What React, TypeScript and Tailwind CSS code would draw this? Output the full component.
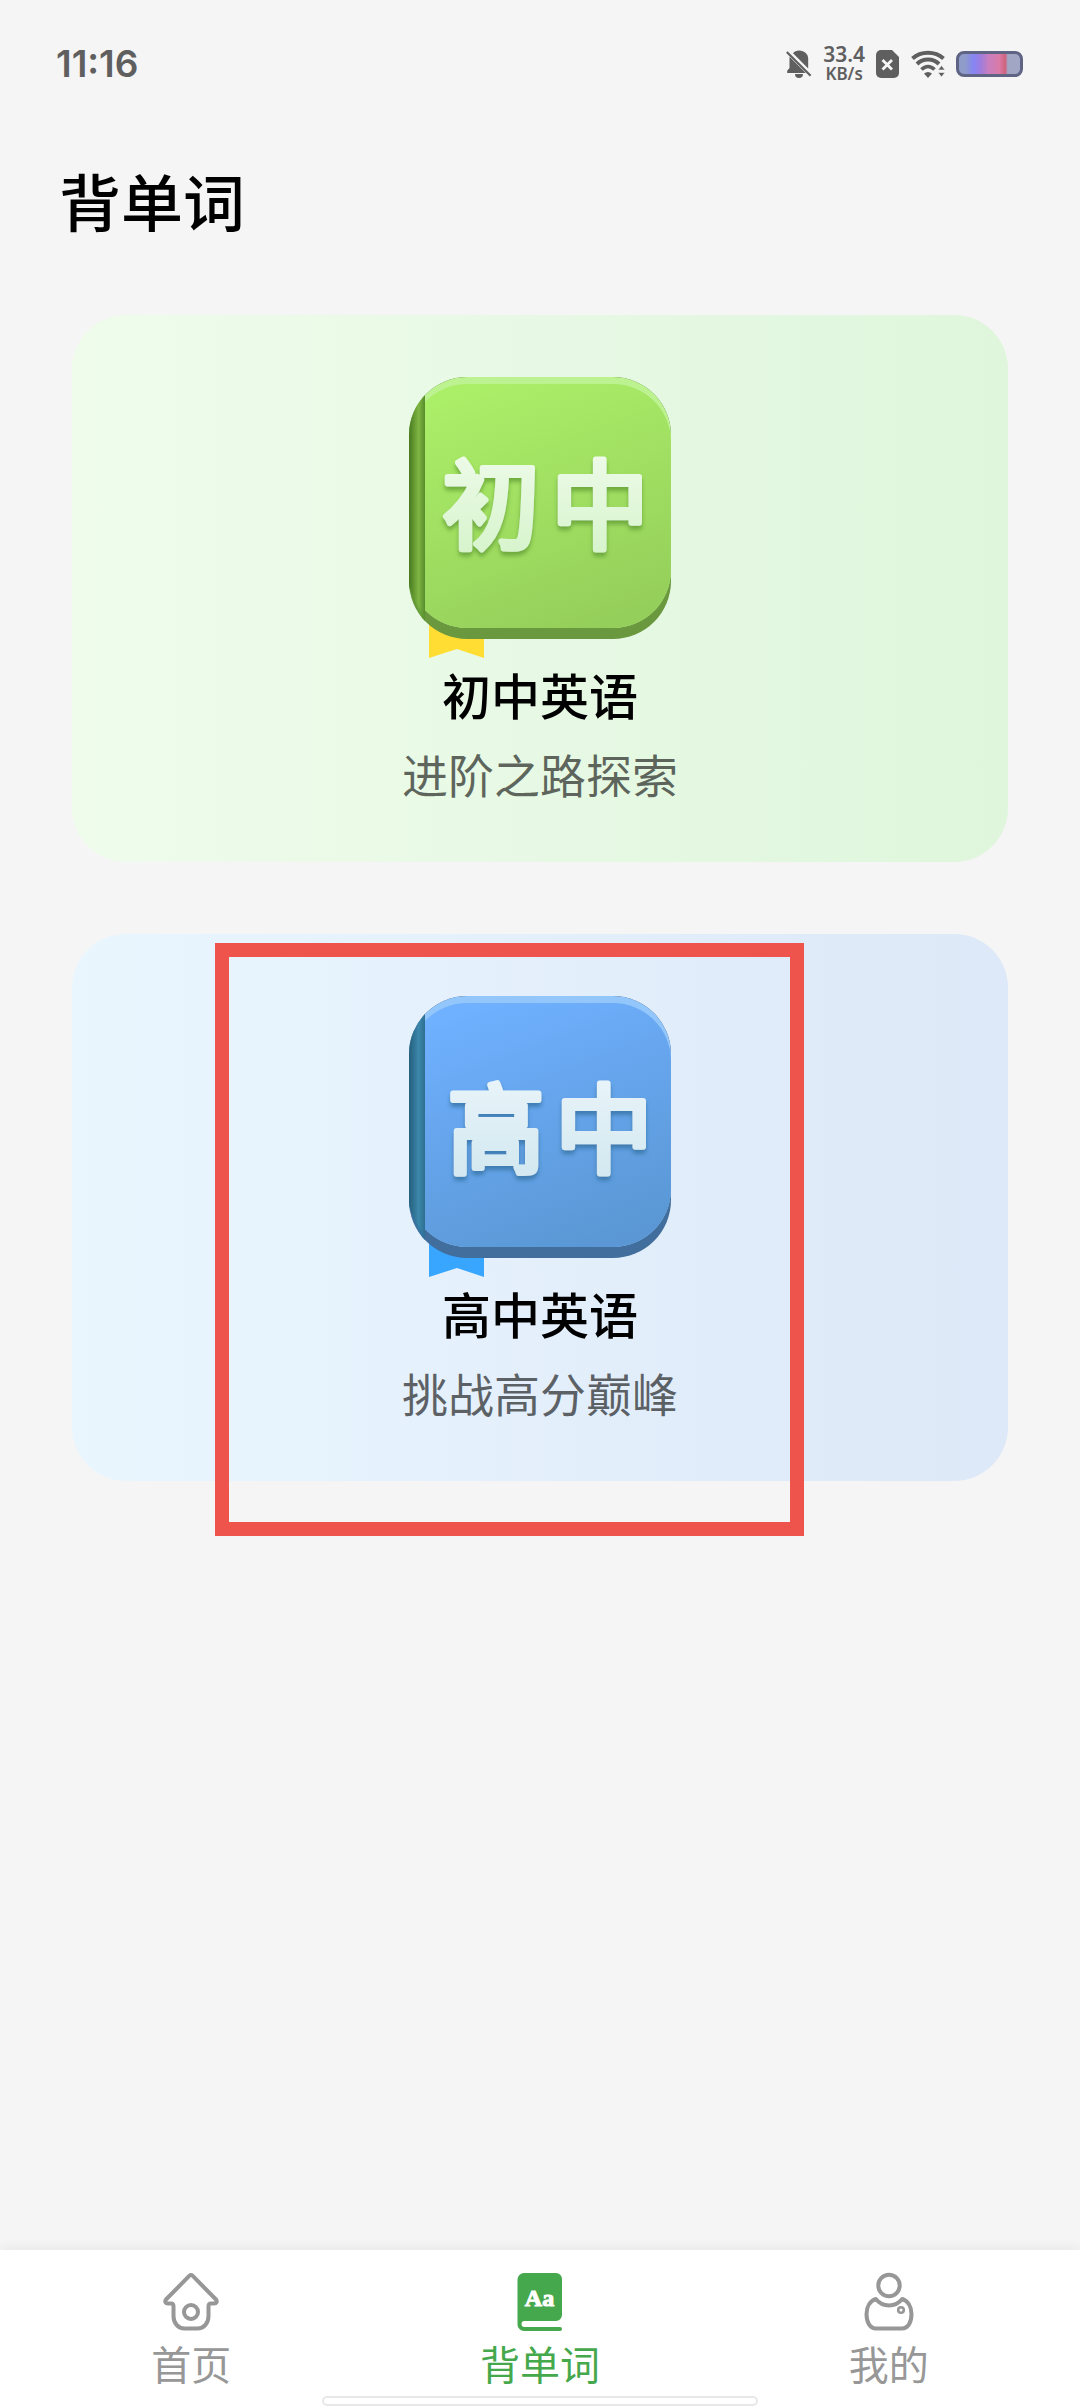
import type { ReactNode } from "react";

type Course = {
  id: string;
  badge: { char: string; x: number }[];
  badgeY: number;
  title: string;
  subtitle: string;
  card: string;
  cover: [string, string];
  spine: [string, string, string];
  highlight: string;
  base: string;
  ribbon: string;
  glyph: [string, string];
  shade: string;
  marked: boolean;
};

const courses: Course[] = [
  {
    id: "junior",
    badge: [
      { char: "初", x: 82 },
      { char: "中", x: 191 },
    ],
    badgeY: 164,
    title: "初中英语",
    subtitle: "进阶之路探索",
    card: "from-[#effcec] to-[#dff6dc]",
    cover: ["#abee68", "#95cf5b"],
    spine: ["#47791f", "#7fb643", "#578c2c"],
    highlight: "#bdf291",
    base: "#6a983f",
    ribbon: "#ffdd33",
    glyph: ["#f3fcef", "#d3f3c8"],
    shade: "#5d9a32",
    marked: false,
  },
  {
    id: "senior",
    badge: [
      { char: "高", x: 87 },
      { char: "中", x: 195 },
    ],
    badgeY: 169,
    title: "高中英语",
    subtitle: "挑战高分巅峰",
    card: "from-[#eaf6fe] to-[#dde8f8]",
    cover: ["#6fb0ff", "#5a97d4"],
    spine: ["#245f7c", "#3c87ab", "#2d6f91"],
    highlight: "#93c7fb",
    base: "#426e9d",
    ribbon: "#38a6ff",
    glyph: ["#eef7fb", "#cfe6ef"],
    shade: "#33719f",
    marked: true,
  },
];

function BookCover({ course }: { course: Course }) {
  const { id } = course;
  return (
    <svg viewBox="0 0 262 282" className="h-[282px] w-[262px]" aria-hidden="true">
      <defs>
        <linearGradient id={`${id}-cover`} x1="0.3" y1="0" x2="0.7" y2="1">
          <stop offset="0" stopColor={course.cover[0]} />
          <stop offset="1" stopColor={course.cover[1]} />
        </linearGradient>
        <linearGradient id={`${id}-spine`} x1="0" y1="0" x2="1" y2="0">
          <stop offset="0" stopColor={course.spine[0]} />
          <stop offset="0.6" stopColor={course.spine[1]} />
          <stop offset="1" stopColor={course.spine[2]} />
        </linearGradient>
        <linearGradient id={`${id}-glyph`} x1="0" y1="0" x2="0" y2="1">
          <stop offset="0" stopColor={course.glyph[0]} />
          <stop offset="1" stopColor={course.glyph[1]} />
        </linearGradient>
        <clipPath id={`${id}-outline`}>
          <rect width="262" height="262" rx="58" />
        </clipPath>
        <filter id={`${id}-shadow`} x="-10%" y="-10%" width="120%" height="130%">
          <feDropShadow dx="0" dy="4" stdDeviation="2" floodColor={course.shade} floodOpacity="0.75" />
        </filter>
      </defs>
      <path d="M20 230h55v51l-27-9-28 9z" fill={course.ribbon} />
      <g clipPath={`url(#${id}-outline)`}>
        <rect width="262" height="262" fill={course.base} />
        <rect width="262" height="251" rx="58" fill={course.highlight} />
        <rect y="7" width="262" height="244" rx="58" fill={`url(#${id}-cover)`} />
        <path d="M0 0h16v250L0 210z" fill={`url(#${id}-spine)`} />
        <path d="M0 204c2 14 8 26 16 33v25H0z" fill={course.shade} fillOpacity="0.45" />
      </g>
      <text
        y={course.badgeY}
        textAnchor="middle"
        fontSize="97"
        fontWeight="400"
        fill={`url(#${id}-glyph)`}
        stroke={`url(#${id}-glyph)`}
        strokeWidth="6"
        strokeLinejoin="round"
        filter={`url(#${id}-shadow)`}
      >
        {course.badge.map(({ char, x }) => (
          <tspan key={char} x={x}>
            {char}
          </tspan>
        ))}
      </text>
    </svg>
  );
}

function CourseCard({ course }: { course: Course }) {
  return (
    <div className="relative">
      <a
        href={`#${course.id}`}
        className={`flex flex-col items-center rounded-[54px] bg-linear-to-r pt-[62px] pb-[57px] ${course.card}`}
      >
        <BookCover course={course} />
        <h2 className="text-[49px] leading-[70px] font-medium text-black">{course.title}</h2>
        <p className="mt-3 text-[46px] leading-[64px] text-black/60">{course.subtitle}</p>
      </a>
      {course.marked && (
        <div className="pointer-events-none absolute top-[9px] right-[204px] left-[143px] h-[593px] border-14 border-[#ef544c]" />
      )}
    </div>
  );
}

function StatusBar() {
  return (
    <div className="flex h-32 items-center justify-between pr-[57px] pl-14 text-[#5f5f5f]">
      <time className="font-['Inter'] text-[37px] leading-10 font-semibold">11:16</time>
      <div className="flex items-center gap-[11px]">
        <svg viewBox="0 0 26 28" className="h-7 w-[26px]" fill="currentColor" aria-label="静音">
          <path d="M7 3.2C8.300 1.300 10.500.4 13.200.4c5.300 0 9 3.500 9 8.600v9.600z" />
          <path d="M3.500 6.800 19.800 23H1.200v-2.300l2.300-2.600zM9 24h8a4 4 0 0 1-8 0z" />
          <path d="M.8 2 24.600 25.800" stroke="currentColor" strokeWidth="2.200" />
        </svg>
        <div className="flex flex-col items-center font-['Noto_Sans'] font-semibold">
          <span className="text-[21px] leading-5">33.4</span>
          <span className="text-[17px] leading-5">KB/s</span>
        </div>
        <svg viewBox="0 0 24 28" className="h-7 w-6" aria-label="无SIM卡">
          <path d="M5 0h11l7 7v16a5 5 0 0 1-5 5H5a5 5 0 0 1-5-5V5a5 5 0 0 1 5-5z" fill="currentColor" />
          <path d="m6.500 10 9.500 9.500m0-9.500-9.500 9.500" stroke="#f5f5f5" strokeWidth="2.800" />
        </svg>
        <svg viewBox="0 0 34 28" className="h-7 w-[34px]" fill="none" aria-label="无线网络">
          <path d="M1.500 8.500C10 .8 24 .8 32.500 8.500" stroke="currentColor" strokeWidth="4" />
          <path d="M6 14c6-6 16-6 22 0" stroke="currentColor" strokeWidth="4" />
          <path d="M10.500 19.500c4-4 9-4 13 0" stroke="currentColor" strokeWidth="3.600" />
          <path d="M13 23.500c2.500-2 5.500-2 8 0l-4 4.500z" fill="currentColor" />
          <path d="m27 20 3.500-4.500L34 20zM27 22.500h7L30.500 27z" fill="currentColor" stroke="#f5f5f5" strokeWidth=".6" />
        </svg>
        <div className="h-[26px] w-[67px] rounded-[8px] border-[3px] border-[#5f6485] bg-[linear-gradient(to_right,#8f9bc8_10%,#8585f5_24%,#a07cdc_36%,#c87fc0_48%,#d97aa8_66%,#d0627c_76%,#a0a6c4_80%)]" />
      </div>
    </div>
  );
}

function HomeIcon() {
  return (
    <svg viewBox="0 0 60 60" className="size-[60px]" fill="none" stroke="currentColor" strokeWidth="4" strokeLinejoin="round" aria-hidden="true">
      <path d="M28.500 4.700a2 2 0 0 1 3 0L55 28.500c1.500 2 .5 4-2 4h-3c-2 0-2.500 1-2.500 3V45c0 7-4.500 12.500-11 12.500h-13C17 57.500 12.500 52 12.500 45v-9.500c0-2-.5-3-2.500-3H7c-2.500 0-3.500-2-2-4z" />
      <circle cx="30" cy="41" r="7" />
    </svg>
  );
}

function WordBookIcon() {
  return (
    <svg viewBox="0 0 60 60" className="size-[60px]" aria-hidden="true">
      <path
        d="M14 2h32a6 6 0 0 1 6 6v36a6 6 0 0 1-6 6H14.500a3 3 0 0 0 0 6H50a2 2 0 0 1 0 4H14a6.500 6.500 0 0 1-6.500-6.500V8.500A6.500 6.500 0 0 1 14 2z"
        fill="currentColor"
      />
      <text x="29.500" y="35" textAnchor="middle" fontSize="24" fontWeight="700" fill="#fff" stroke="#fff" strokeWidth="1" className="font-['Liberation_Serif']">
        Aa
      </text>
    </svg>
  );
}

function ProfileIcon() {
  return (
    <svg viewBox="0 0 60 60" className="size-[60px]" fill="none" stroke="currentColor" strokeWidth="4" strokeLinejoin="round" aria-hidden="true">
      <circle cx="30" cy="14.500" r="10.700" />
      <path d="M16.800 28C11 30 7.500 36 7.500 43c0 8.500 3.500 14.500 9.500 14.500h26c6 0 9.500-6 9.500-14.500 0-7-3.500-13-9.300-15-6.700 8.500-19.700 8.500-26.400 0z" />
      <circle cx="42" cy="39" r="2.800" strokeWidth="2.600" />
    </svg>
  );
}

function NavItem({ label, href, active, children }: { label: string; href: string; active?: boolean; children: ReactNode }) {
  return (
    <a
      href={href}
      aria-current={active ? "page" : undefined}
      className={`flex flex-1 flex-col items-center gap-2 ${active ? "text-[#46a84c]" : "text-[#979797]"}`}
    >
      {children}
      <span className="text-[40px] leading-[48px]">{label}</span>
    </a>
  );
}

export default function App() {
  return (
    <div className="flex min-h-screen flex-col bg-[#f5f5f5] font-['Noto_Sans_CJK_SC',sans-serif]">
      <StatusBar />
      <header className="px-[59px] pt-8">
        <h1 className="text-[62px] leading-[80px] font-medium text-black">背单词</h1>
      </header>
      <main className="flex flex-1 flex-col gap-[72px] px-[72px] pt-[75px] pb-16">
        {courses.map((course) => (
          <CourseCard key={course.id} course={course} />
        ))}
      </main>
      <nav className="relative flex bg-white px-[17px] pt-[21px] pb-[21px] shadow-[0_-2px_12px_rgba(0,0,0,0.06)]">
        <NavItem label="首页" href="#home">
          <HomeIcon />
        </NavItem>
        <NavItem label="背单词" href="#words" active>
          <WordBookIcon />
        </NavItem>
        <NavItem label="我的" href="#profile">
          <ProfileIcon />
        </NavItem>
        <div className="absolute inset-x-[322px] bottom-[2px] h-[10px] rounded-full border-2 border-[#e8e8e8] bg-white" />
      </nav>
    </div>
  );
}
